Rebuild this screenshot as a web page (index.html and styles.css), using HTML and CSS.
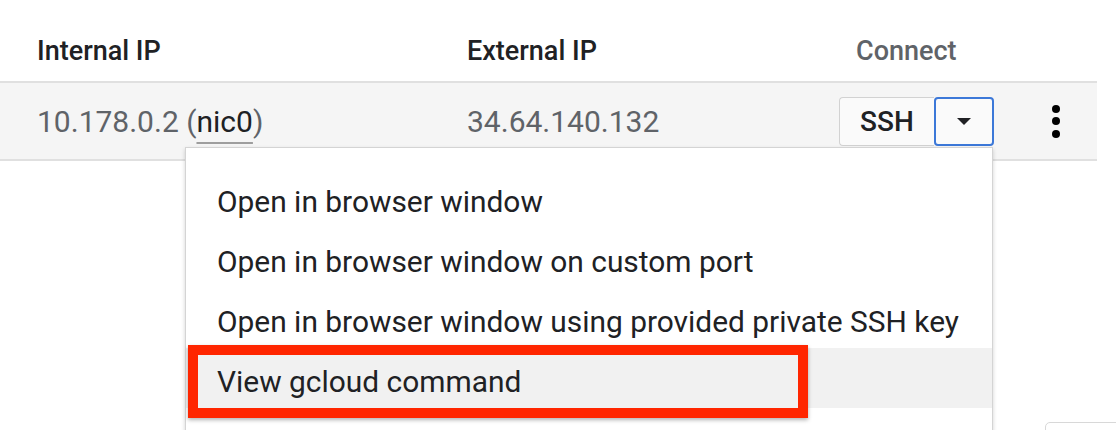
FILE: index.html
```html
<!DOCTYPE html>
<html>
<head>
<meta charset="utf-8">
<link rel="stylesheet" href="styles.css">
</head>
<body>
<div class="page">
  <div class="table">
    <div class="row head">
      <div class="cell c1">Internal IP</div>
      <div class="cell c2">External IP</div>
      <div class="cell c3 muted">Connect</div>
      <div class="cell c4"></div>
    </div>
    <div class="row body">
      <div class="cell c1">10.178.0.2 (<span class="nic">nic0</span>)</div>
      <div class="cell c2">34.64.140.132</div>
      <div class="cell c3">
        <div class="split">
          <button class="ssh">SSH</button>
          <button class="drop"><svg width="14" height="7" viewBox="0 0 14 7"><polygon points="0,0 14,0 7,7" fill="#202124"/></svg></button>
        </div>
      </div>
      <div class="cell c4">
        <div class="kebab"><span></span><span></span><span></span></div>
      </div>
    </div>
  </div>
  <div class="below"><div class="pager"></div></div>

  <div class="menu">
    <div class="item">Open in browser window</div>
    <div class="item">Open in browser window on custom port</div>
    <div class="item">Open in browser window using provided private SSH key</div>
    <div class="item hl">View gcloud command</div>
    <div class="item">Use another SSH client</div>
  </div>
  <div class="callout"></div>
</div>
</body>
</html>
```

FILE: styles.css
```css
html, body {
  margin: 0;
  padding: 0;
  background: #ffffff;
}
body {
  font-family: Roboto, "Liberation Sans", sans-serif;
  color: #202124;
  width: 1116px;
  height: 430px;
  overflow: hidden;
}
.page {
  position: relative;
  width: 1116px;
  height: 430px;
}
.table {
  width: 1097px;
}
.row {
  display: grid;
  grid-template-columns: 467px 372px 155px 103px;
}
.cell {
  display: flex;
  align-items: center;
}
.c1 {
  padding-left: 37px;
}
.head {
  height: 61px;
  padding-top: 20px;
  border-bottom: 2px solid #e0e0e0;
  font-size: 27px;
  font-weight: 500;
  color: #202124;
}
.head .c3 {
  padding-left: 17px;
}
.muted {
  color: #5f6368;
}
.body {
  height: 76px;
  background: #f5f5f5;
  border-bottom: 2px solid #e0e0e0;
  font-size: 30px;
  color: #5f6368;
}
.nic {
  color: #202124;
  text-decoration: underline;
  text-decoration-color: #9e9e9e;
  text-decoration-thickness: 2px;
  text-underline-offset: 10px;
}
.split {
  display: flex;
  height: 49px;
}
.ssh {
  width: 95px;
  height: 49px;
  box-sizing: border-box;
  border: 1px solid #d2d2d2;
  border-right: none;
  border-radius: 4px 0 0 4px;
  background: #fafafa;
  font-family: Roboto, "Liberation Sans", sans-serif;
  font-size: 28px;
  font-weight: 500;
  color: #202124;
  padding: 0;
}
.drop {
  width: 60px;
  height: 49px;
  box-sizing: border-box;
  border: 2px solid #3c78d8;
  border-radius: 4px;
  background: #fafafa;
  display: flex;
  align-items: center;
  justify-content: center;
  padding: 0;
}
.c4 {
  padding-left: 58px;
}
.kebab {
  display: flex;
  flex-direction: column;
  gap: 4.5px;
}
.kebab span {
  width: 8px;
  height: 8px;
  border-radius: 50%;
  background: #000;
}
.below {
  display: flex;
  padding-left: 1045px;
  padding-top: 261px;
}
.pager {
  width: 80px;
  height: 40px;
  border: 1px solid #d8d8d8;
  border-radius: 5px;
  flex: none;
}
.menu {
  position: absolute;
  left: 185px;
  top: 147px;
  width: 806px;
  height: 320px;
  padding-top: 20px;
  background: #ffffff;
  border: 1px solid #d4d4d4;
  box-shadow: 0 2px 4px rgba(0, 0, 0, 0.18);
  font-size: 29.9px;
  color: #202124;
}
.item {
  height: 60px;
  box-sizing: border-box;
  padding-top: 6px;
  display: flex;
  align-items: center;
  padding-left: 31px;
  white-space: nowrap;
}
.item.hl {
  background: #f1f1f1;
}
.callout {
  position: absolute;
  left: 188px;
  top: 345px;
  width: 600px;
  height: 53px;
  border: 10px solid #ff2600;
  box-shadow: 0 2px 4px rgba(0, 0, 0, 0.3);
}
```
